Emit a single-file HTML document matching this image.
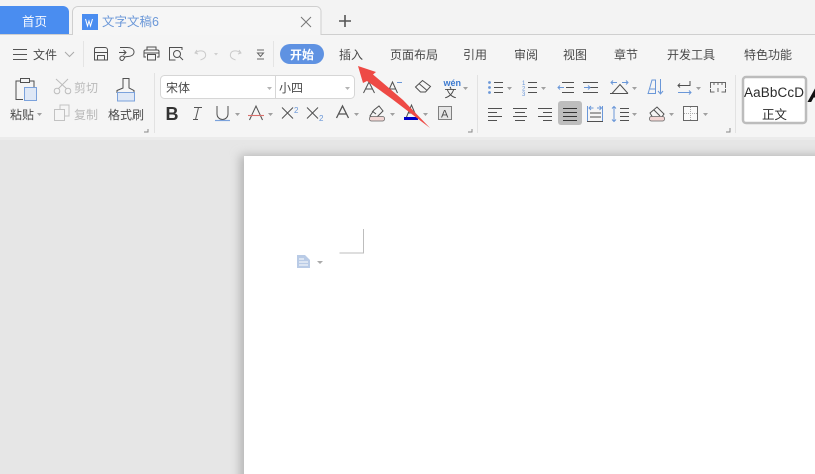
<!DOCTYPE html>
<html lang="zh"><head><meta charset="utf-8"><title>文字文稿6</title>
<style>
html,body{margin:0;padding:0;width:815px;height:474px;overflow:hidden;background:#e6e6e6}
svg{display:block}
text{font-family:"Liberation Sans","Noto Sans CJK SC",sans-serif;font-size:12px;fill:#4a4a4a}
.g{fill:#bababa}
.s{fill:none;stroke:#505050;stroke-width:1}
.b{fill:none;stroke:#6a97d8;stroke-width:1}
.c{fill:#a0a0a0}
</style></head><body>
<svg width="815" height="474" viewBox="0 0 815 474" xmlns="http://www.w3.org/2000/svg">
<defs>
<filter id="bl" x="-20%" y="-20%" width="140%" height="140%"><feGaussianBlur stdDeviation="5"/></filter>
<clipPath id="cp"><rect x="0" y="140" width="815" height="334"/></clipPath>
</defs>
<!-- backgrounds -->
<rect width="815" height="474" fill="#e6e6e6"/>
<rect width="815" height="35" fill="#f3f3f3"/>
<rect y="35" width="815" height="102" fill="#f5f5f5"/>
<rect y="137" width="815" height="3" fill="#ebebeb"/>
<g clip-path="url(#cp)"><rect x="240" y="155" width="600" height="340" fill="#b4b4b4" filter="url(#bl)"/></g>
<rect x="244" y="156" width="571" height="318" fill="#fff"/>
<!-- tabs -->
<path d="M0 34V6H63a6 6 0 0 1 6 6V34Z" fill="#4a8df0"/>
<text x="22" y="26" style="font-size:12.500px;fill:#f4f8ff">首页</text>
<path d="M0 34.500H72.500V12a5.500 5.500 0 0 1 5.500-5.500H316a5 5 0 0 1 5 5V34.500H815" fill="none" stroke="#cfcfcf"/>
<path d="M73 35V12a5 5 0 0 1 5-5H316a4.500 4.500 0 0 1 4.500 4.500V35Z" fill="#f6f6f6"/>
<rect x="82" y="14" width="16" height="16" fill="#4a8df0"/>
<path d="M85.500 19l2 7 1.500-5 1.500 5 2-7" fill="none" stroke="#fff" stroke-width="1"/>
<text x="102" y="26" style="font-size:12.500px;fill:#6a97d8">文字文稿6</text>
<path d="M301 17l10 10M311 17l-10 10" stroke="#777" stroke-width="1"/>
<path d="M339 21h12M345 15v12" stroke="#555" stroke-width="1.600"/>
<!-- menu row -->
<path d="M13 49.500h14M13 54.500h14M13 59.500h14" stroke="#555" stroke-width="1"/>
<text x="33" y="59">文件</text>
<path d="M65 52l4.500 4.500 4.500-4.500" fill="none" stroke="#aaa" stroke-width="1"/>
<path d="M83.500 41v26" stroke="#e4e4e4"/>
<path d="M96 47.500h9a2.500 2.500 0 0 1 2.500 2.500v10h-13V49a1.500 1.500 0 0 1 1.500-1.500zM94.500 52.500h13M97.500 60v-4.500h7V60" class="s"/>
<path d="M120 47.500h7c4 0 7 1.500 7 4.500s-3 4.500-6 4.500c-1 0-2 0-3 .5-1 1-1 3.500-3 3.500s-3-3 -1-4 3 0 4 1M119 52.500h7M123.500 50l2.500 2.500-2.500 2.500" class="s"/>
<path d="M147 50v-3h9v3M146 57h-2v-5.500a1.500 1.500 0 0 1 1.500-1.500h12a1.500 1.500 0 0 1 1.500 1.500V57h-2M147.500 54.500h8v5.500h-8zM144 53h15" class="s"/>
<path d="M182 50v-2.500h-12.500v12.500h6" class="s"/><circle cx="177" cy="54" r="3.500" class="s"/><path d="M179.500 56.500l3.500 3.500" class="s"/>
<path d="M197 50l-2 3 3 1M195.500 53c3-3 9-3 10 1s-3 5-5 6" fill="none" stroke="#cacaca" stroke-width="1"/>
<path d="M214 53h4l-2 2.500z" fill="#cfcfcf"/>
<path d="M239 50l2 3-3 1M240.500 53c-3-3-9-3-10 1s3 5 5 6" fill="none" stroke="#cacaca" stroke-width="1"/>
<path d="M257 50h7M257.500 53h6l-3 3.500zM257 59h7" fill="none" stroke="#666"/>
<path d="M273.500 41v26" stroke="#e4e4e4"/>
<rect x="280" y="44" width="44" height="20" rx="10" fill="#5f92e2"/>
<text x="290" y="59" style="fill:#fff;font-weight:700">开始</text>
<text x="339" y="59">插入</text>
<text x="390" y="59">页面布局</text>
<text x="463" y="59">引用</text>
<text x="514" y="59">审阅</text>
<text x="563" y="59">视图</text>
<text x="614" y="59">章节</text>
<text x="667" y="59">开发工具</text>
<text x="744" y="59">特色功能</text>
<!-- clipboard group -->
<path d="M23 99.500h-7V81h4M30 81h4v6" class="s"/><path d="M20.500 78.500h9v4h-9z" class="s"/>
<rect x="24.500" y="87.500" width="12" height="13" fill="#dfe8f6" stroke="#7ba2dc"/>
<text x="10" y="119">粘贴</text><path d="M37 113h5l-2.500 3z" class="c"/>
<path d="M56 79l12 11M68 79L57 90" stroke="#bcbcbc" fill="none"/><circle cx="57" cy="91" r="2.800" fill="#f5f5f5" stroke="#bcbcbc"/><circle cx="68" cy="91" r="2.800" fill="#f5f5f5" stroke="#bcbcbc"/>
<text x="74" y="92" class="g">剪切</text>
<path d="M60 109v-4h9v11h-4M54.500 109.500h10v11h-10z" fill="none" stroke="#c2c2c2"/>
<text x="74" y="119" class="g">复制</text>
<path d="M123 88v-9.500h6V88l5 2.500v2h-17v-2z" class="s"/><rect x="117.500" y="92.500" width="17" height="8.500" fill="#dfe8f6" stroke="#7ba2dc"/>
<text x="108" y="119">格式刷</text>
<path d="M148 129v3h-4" stroke="#888" fill="none"/>
<path d="M154.500 73v60" stroke="#e2e2e2"/>
<!-- font -->
<rect x="160.500" y="75.500" width="194" height="23" rx="4" fill="#fff" stroke="#d6d6d6"/>
<path d="M275.500 76v22" stroke="#d6d6d6"/>
<text x="166" y="92">宋体</text><text x="279" y="92">小四</text>
<path d="M267 87h5l-2.500 3zM345 87h5l-2.500 3z" fill="#b4b4b4"/>
<text x="165.500" y="120" style="font-size:18px;font-weight:700;fill:#333">B</text>
<path d="M194 107.500h8M193 119.500h5M198.500 107.500l-3 12" stroke="#555" fill="none"/>
<path d="M217 106v8a5.500 5.500 0 0 0 11 0v-8" class="s"/><path d="M215 120.500h15" stroke="#7ba2dc" stroke-width="1.200"/>
<path d="M235 113h5l-2.500 3z" class="c"/>
<path d="M249.500 120l6.500-14 6.500 14" class="s"/><path d="M248 115.500h16" stroke="#d9706c" stroke-width="1.100"/>
<path d="M268 113h5l-2.500 3z" class="c"/>
<path d="M282 107.500l11 11M293 107.500l-11 11" class="s"/><text x="294" y="113" style="font-size:8px;fill:#6a97d8">2</text>
<path d="M307 107.500l11 11M318 107.500l-11 11" class="s"/><text x="319" y="121" style="font-size:8px;fill:#6a97d8">2</text>
<path d="M336.500 118l6-12 6 12M339 114h7" fill="none" stroke="#555" stroke-width="1.300"/>
<path d="M354 113h5l-2.500 3z" class="c"/>
<path d="M363.500 93l5.500-11 5.500 11M365.500 89h7" class="s"/>
<path d="M387.500 93l5-11 5 11M389.500 89h6" class="s"/><path d="M397 82.500h5" stroke="#6a97d8"/>
<path d="M415.500 87l7-6.500 8 6-5 5.500h-5zM419.500 84l7 6" class="s"/>
<text x="443.500" y="86" style="font-size:9px;fill:#3c7ad0;font-weight:700">wén</text>
<text x="444.500" y="97" style="font-size:12px;fill:#4a4a4a">文</text>
<path d="M463 87h5l-2.500 3z" class="c"/>
<path d="M374 110l-4 6 5 3 8-8-4-5zM376 114l-4-3" class="s"/><rect x="369.500" y="116.500" width="15" height="4.500" rx="2" fill="#f3d7d5" stroke="#666" stroke-width=".8"/>
<path d="M390 113h5l-2.500 3z" class="c"/>
<path d="M406.500 117l5-12 5 12M408.500 113h6" class="s"/><rect x="404" y="117" width="14" height="3" fill="#0000c8"/>
<path d="M423 113h5l-2.500 3z" class="c"/>
<rect x="438.500" y="106.500" width="13" height="13" fill="#e6e6e6" stroke="#808080"/><text x="441" y="117.500" style="font-size:11px">A</text>
<path d="M472 129v3h-4" stroke="#888" fill="none"/>
<path d="M477.500 75v58" stroke="#e2e2e2"/>
<!-- paragraph top row -->
<g fill="none" stroke="#505050">
<path d="M494 82.500h9M494 87.500h9M494 92.500h9"/>
<path d="M528 82.500h9M528 87.500h9M528 92.500h9"/>
<path d="M562 82.500h12M566 87.500h8M562 92.500h12M583 82.500h15M589 87.500h9M583 92.500h15"/>
<path d="M612 93.500l8-9 8 9M610 93.500h18"/>
<path d="M488 108.500h14M488 112.500h9M488 116.500h14M488 120.500h9"/>
<path d="M513 108.500h14M515 112.500h10M513 116.500h14M515 120.500h10"/>
<path d="M538 108.500h14M543 112.500h9M538 116.500h14M543 120.500h9"/>
</g>
<circle cx="489.500" cy="82.500" r="1.400" fill="#6a97d8"/><circle cx="489.500" cy="87.500" r="1.400" fill="#6a97d8"/><circle cx="489.500" cy="92.500" r="1.400" fill="#6a97d8"/>
<text x="522" y="85" style="font-size:6px;fill:#6a97d8">1</text><text x="522" y="90.500" style="font-size:6px;fill:#6a97d8">2</text><text x="522" y="96" style="font-size:6px;fill:#6a97d8">3</text>
<path d="M558 87.500h6M560 85.500l-2 2 2 2M584 87.500h6M588 85.500l2 2-2 2M611 82.500h6M622 82.500h6M613 80.500l-2 2 2 2M626 80.500l2 2-2 2" class="b"/>
<path d="M660.500 79v15M658 91l2.500 3 2.500-3" class="b"/>
<path d="M648 94l4-14h3.500v14M650 89h5M647.500 93.500h8" class="b"/>
<path d="M507 87h5l-2.500 3zM541 87h5l-2.500 3zM632 87h5l-2.500 3zM696 87h5l-2.500 3z" class="c"/>
<path d="M690 81v4.500h-12M680 83.500l-2 2 2 2" class="s"/>
<path d="M678 92.500h13M689 90.500l2 2-2 2" class="b"/>
<path d="M710.500 88v-5.500h15V88M714 83v2M718 83v2M722 83v2M710.500 89v3h4M725.500 89v3h-4M718 88v4" fill="none" stroke="#666"/>
<rect x="558" y="101" width="24" height="24" rx="3" fill="#bdbdbd"/>
<path d="M563 108.500h14M563 112.500h14M563 116.500h14M563 120.500h14" stroke="#333" fill="none"/>
<path d="M587.500 106v15M602.500 106v15M589 108h4.500M597 108h4.500M591 106l-2 2 2 2M599.500 106l2 2-2 2" class="b"/>
<path d="M590 113h11M590 117h11M587 121.500h16" stroke="#505050" fill="none"/>
<path d="M614 106.500v15M612 108.500l2-2 2 2M612 119.500l2 2 2-2" class="b"/>
<path d="M620 108.500h9M620 112.500h9M620 116.500h9M620 120.500h9" stroke="#505050" fill="none"/>
<path d="M632 113h5l-2.500 3zM669 113h5l-2.500 3zM703 113h5l-2.500 3z" class="c"/>
<path d="M650 113l7-6 7 7-3 4h-8zM654 110l6 6" class="s"/><rect x="649.500" y="116.500" width="15" height="4.500" rx="2" fill="#f3d7d5" stroke="#666" stroke-width=".8"/>
<rect x="683.500" y="106.500" width="14" height="14" fill="#fafafa" stroke="#666"/><path d="M690.500 107v13M684 113.500h13" stroke="#aaa" stroke-dasharray="1 1"/>
<path d="M730 128v4h-4" stroke="#888" fill="none"/>
<path d="M735.500 75v58" stroke="#e2e2e2"/>
<!-- styles -->
<rect x="743" y="77" width="63" height="46" rx="3" fill="#fff" stroke="#bcbcbc" stroke-width="2.500"/>
<text x="744" y="97" style="font-size:13.500px;fill:#2a2a2a" textLength="60">AaBbCcD</text>
<text x="762" y="119" style="font-size:12.500px;fill:#2a2a2a">正文</text>
<text x="808" y="102" style="font-size:26px;font-weight:700;font-style:italic;fill:#111">A</text>
<!-- arrow -->
<path d="M358 66L376 72L373 74.500L403 100L430 128L392 99L367 81L363 83Z" fill="#ee4a45"/>
<!-- doc -->
<path d="M363.500 229v24h-24" fill="none" stroke="#bdbdbd"/>
<path d="M297 255h8l5 5v8h-13z" fill="#b9cbe6"/>
<path d="M299 259h5M299 262h9M299 265h9" stroke="#fff"/>
<path d="M317 261h6l-3 3z" fill="#aaa"/>
</svg>
</body></html>
